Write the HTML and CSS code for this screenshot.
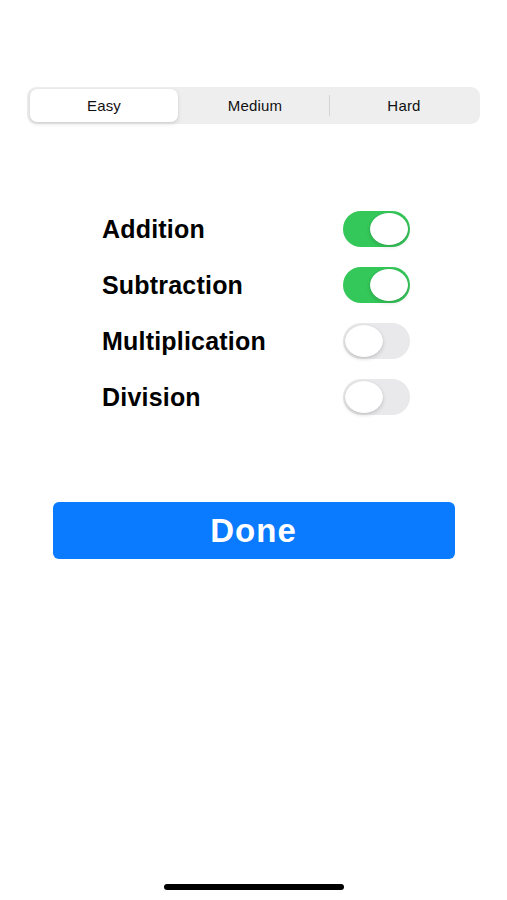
FILE: index.html
```html
<!DOCTYPE html>
<html lang="en">
<head>
    <meta charset="UTF-8">
    <meta name="viewport" content="width=device-width, initial-scale=1.0">
    <title>Settings</title>
    <link rel="stylesheet" href="styles.css">
</head>
<body>
    <div class="screen">
        <!-- Difficulty picker -->
        <div class="segmented">
            <div class="segment selected">Easy</div>
            <div class="segment">Medium</div>
            <div class="segment divided">Hard</div>
        </div>

        <!-- Operations -->
        <ul class="options">
            <li class="option">
                <span>Addition</span>
                <div class="toggle on"><div class="knob"></div></div>
            </li>
            <li class="option">
                <span>Subtraction</span>
                <div class="toggle on"><div class="knob"></div></div>
            </li>
            <li class="option">
                <span>Multiplication</span>
                <div class="toggle"><div class="knob"></div></div>
            </li>
            <li class="option">
                <span>Division</span>
                <div class="toggle"><div class="knob"></div></div>
            </li>
        </ul>

        <button class="done-button">Done</button>

        <div class="spacer"></div>
        <div class="home-indicator"></div>
    </div>
</body>
</html>
```

FILE: styles.css
```css
body {
    margin: 0;
    padding: 0;
    background: #fff;
    font-family: "Liberation Sans", Arial, sans-serif;
    color: #000;
}

.screen {
    height: 900px;
    display: flex;
    flex-direction: column;
    align-items: center;
}

/* Segmented control */
.segmented {
    margin-top: 87px;
    width: 449px;
    height: 33px;
    padding: 2px;
    display: flex;
    background-color: #eeeeef;
    border-radius: 9px;
}

.segment {
    flex: 1;
    display: flex;
    justify-content: center;
    align-items: center;
    font-size: 15px;
    letter-spacing: 0.2px;
    color: #111;
}

.segment.selected {
    background-color: #fff;
    border-radius: 7px;
    margin: 0 3px 0 1px;
    box-shadow: 0 2px 4px rgba(0, 0, 0, 0.12), 0 0 1px rgba(0, 0, 0, 0.1);
}

.segment.divided {
    border-left: 1px solid #d4d4d6;
    margin: 6px 0;
}

/* Toggles */
.options {
    list-style: none;
    margin: 77px 0 0 5px;
    padding: 0;
    width: 308px;
}

.option {
    height: 56px;
    display: flex;
    justify-content: space-between;
    align-items: center;
    font-size: 25px;
    font-weight: bold;
    letter-spacing: 0.2px;
}

.toggle {
    width: 67px;
    height: 36px;
    border-radius: 18px;
    background-color: #e9e9eb;
    display: flex;
    align-items: center;
    padding: 0 2px;
    box-sizing: border-box;
}

.toggle.on {
    background-color: #34c759;
    justify-content: flex-end;
}

.knob {
    width: 38px;
    height: 32px;
    border-radius: 50%;
    background-color: #fff;
    box-shadow: 0 2px 4px rgba(0, 0, 0, 0.15), 0 0 1px rgba(0, 0, 0, 0.15);
}

/* Done */
.done-button {
    margin-top: 77px;
    width: 402px;
    height: 57px;
    border: none;
    border-radius: 6px;
    background-color: #0a7aff;
    color: #fff;
    font-family: "Liberation Sans", Arial, sans-serif;
    font-size: 33px;
    font-weight: bold;
    letter-spacing: 1px;
}

.spacer {
    flex-grow: 1;
}

.home-indicator {
    width: 180px;
    height: 6px;
    border-radius: 3px;
    background-color: #000;
    margin-bottom: 10px;
}
```
